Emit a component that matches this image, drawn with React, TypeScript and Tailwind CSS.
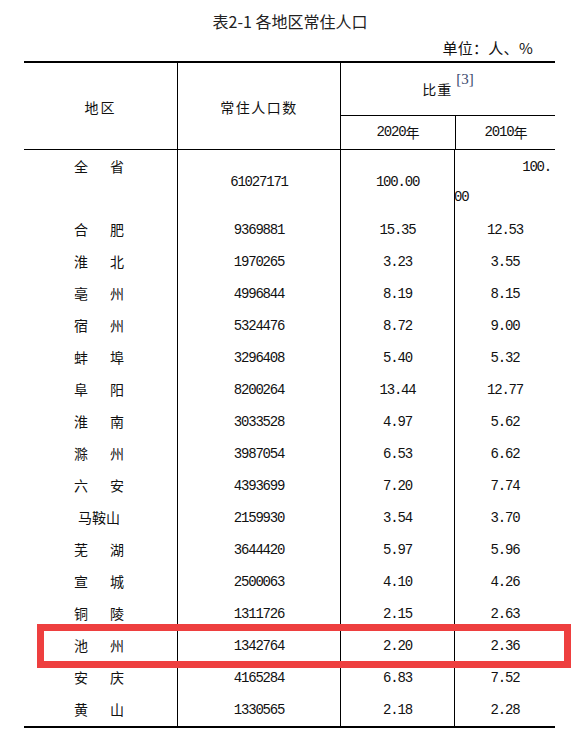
import { ReactNode } from "react";

const ROWS: [string, string, string, string][] = [
  ["合肥", "9369881", "15.35", "12.53"],
  ["淮北", "1970265", "3.23", "3.55"],
  ["亳州", "4996844", "8.19", "8.15"],
  ["宿州", "5324476", "8.72", "9.00"],
  ["蚌埠", "3296408", "5.40", "5.32"],
  ["阜阳", "8200264", "13.44", "12.77"],
  ["淮南", "3033528", "4.97", "5.62"],
  ["滁州", "3987054", "6.53", "6.62"],
  ["六安", "4393699", "7.20", "7.74"],
  ["马鞍山", "2159930", "3.54", "3.70"],
  ["芜湖", "3644420", "5.97", "5.96"],
  ["宣城", "2500063", "4.10", "4.26"],
  ["铜陵", "1311726", "2.15", "2.63"],
  ["池州", "1342764", "2.20", "2.36"],
  ["安庆", "4165284", "6.83", "7.52"],
  ["黄山", "1330565", "2.18", "2.28"],
];

const CN = "font-['Noto_Sans_CJK_SC',sans-serif]";
const NUM = "font-['Liberation_Mono',monospace] text-[14px] tracking-[-1.2px]";

function Name({ name }: { name: string }) {
  return (
    <div
      className={`ml-[50px] w-[50px] flex text-[14px] ${CN} ${
        name.length === 2 ? "justify-between" : "justify-center"
      }`}
    >
      {name.split("").map((c, i) => (
        <span key={i}>{c}</span>
      ))}
    </div>
  );
}

function Cell({ children, first }: { children: ReactNode; first?: boolean }) {
  return (
    <div
      className={`flex items-center justify-center ${
        first ? "" : "border-l border-black"
      }`}
    >
      {children}
    </div>
  );
}

export default function App() {
  return (
    <div className="relative w-[580px] h-[738px] overflow-hidden bg-white text-[#111]">
      <div
        className={`h-[36px] pt-[9px] leading-[24px] text-center text-[16px] text-[#222] ${CN}`}
      >
        表2-1 各地区常住人口
      </div>
      <div
        className={`h-[25px] leading-[24px] text-right pr-[47px] text-[15px] tracking-[0.3px] ${CN}`}
      >
        单位：人、%
      </div>

      <div className="ml-[24px] w-[531px] border-t-2 border-b-2 border-black">
        {/* header */}
        <div className="grid grid-cols-[153px_163px_215px] h-[87px] border-b border-black">
          <div className={`flex items-center justify-center pt-[2px] text-[14px] tracking-[2px] ${CN}`}>
            地区
          </div>
          <div
            className={`flex items-center justify-center pt-[2px] border-l border-black text-[14px] tracking-[1.5px] ${CN}`}
          >
            常住人口数
          </div>
          <div className="flex flex-col border-l border-black">
            <div className="h-[53px] border-b border-black flex items-center justify-center">
              <span className={`text-[14px] tracking-[1px] ${CN}`}>比重</span>
              <span className="ml-[4px] -mt-[20px] font-['Liberation_Serif',serif] text-[15px] text-[#3c4a6e]">
                [3]
              </span>
            </div>
            <div className="flex-1 grid grid-cols-[114px_101px]">
              <div className="flex items-center justify-center">
                <span className={NUM}>2020</span>
                <span className={`text-[14px] ${CN}`}>年</span>
              </div>
              <div className="flex items-center justify-center border-l border-black">
                <span className={NUM}>2010</span>
                <span className={`text-[14px] ${CN}`}>年</span>
              </div>
            </div>
          </div>
        </div>

        {/* 全省 */}
        <div className="grid grid-cols-[153px_163px_114px_101px] h-[64px]">
          <div className="pt-[4px] leading-[24px]">
            <Name name="全省" />
          </div>
          <Cell>
            <span className={NUM}>61027171</span>
          </Cell>
          <Cell>
            <span className={NUM}>100.00</span>
          </Cell>
          <div className={`border-l border-black pt-[2px] leading-[30px] ${NUM}`}>
            <div className="text-right pr-[4px]">100.</div>
            <div className="text-left -ml-[1px]">00</div>
          </div>
        </div>

        {ROWS.map(([name, pop, a, b]) => (
          <div key={name} className="grid grid-cols-[153px_163px_114px_101px] h-[32px]">
            <div className="flex items-center pb-[2px]">
              <Name name={name} />
            </div>
            <Cell>
              <span className={NUM}>{pop}</span>
            </Cell>
            <Cell>
              <span className={NUM}>{a}</span>
            </Cell>
            <Cell>
              <span className={NUM}>{b}</span>
            </Cell>
          </div>
        ))}
      </div>

      {/* highlight box */}
      <div className="absolute left-[37px] top-[624px] w-[534px] h-[44px] border-[7px] border-[#ee3f3f]" />
    </div>
  );
}
